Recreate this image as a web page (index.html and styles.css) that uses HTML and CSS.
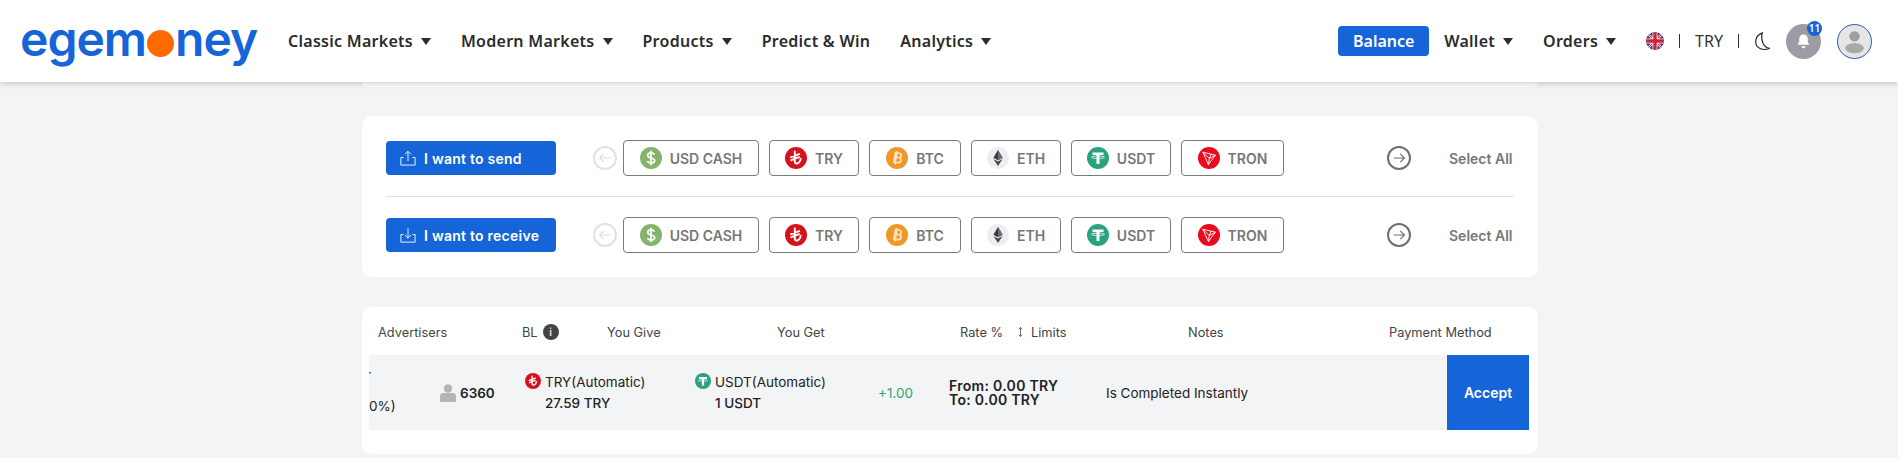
FILE: index.html
```html
<!DOCTYPE html>
<html lang="en">
<head>
  <meta charset="UTF-8" />
  <meta name="viewport" content="width=device-width, initial-scale=1.0" />
  <title>Egemoney P2P</title>
  <link rel="stylesheet" href="styles.css">
</head>
<body>
  <svg class="sprites" aria-hidden="true">
    <symbol id="c-usd" viewBox="0 0 22 22"><circle cx="11" cy="11" r="11" fill="#84b469"/><path d="M14.500 7.600c-.6-1.200-1.900-1.700-3.500-1.700-1.900 0-3.300.9-3.300 2.500 0 3.400 7 1.700 7 5.200 0 1.600-1.500 2.500-3.700 2.500-1.700 0-3-.6-3.600-1.900M11 3.800v14.400" fill="none" stroke="#fff" stroke-width="1.700"/></symbol>
    <symbol id="c-try" viewBox="0 0 22 22"><circle cx="11" cy="11" r="11" fill="#d5121e"/><path d="M9.800 4.500v10.300c0 2 2.300 2.200 3.900 1 1.300-1 1.900-2.400 1.900-4M6 10.200l8.200-3.100M6.200 13.200l7.800-3" fill="none" stroke="#fff" stroke-width="1.900" stroke-linecap="round"/></symbol>
    <symbol id="c-btc" viewBox="0 0 22 22"><circle cx="11" cy="11" r="11" fill="#ef982a"/><path d="M8.600 5.800h3.300c1.800 0 2.900.8 2.900 2.300 0 1.200-.7 2-1.800 2.200 1.400.2 2.300 1.100 2.300 2.500 0 1.700-1.300 2.700-3.300 2.700H8.600zM10 10.300h2.400M10 4.300v13.400" transform="rotate(10 11 11)" fill="none" stroke="#fbe3c0" stroke-width="1.700"/></symbol>
    <symbol id="c-eth" viewBox="0 0 22 22"><circle cx="11" cy="11" r="11" fill="#eceef2"/><path d="M11 3l-4.600 7.800L11 13.300l4.600-2.500z" fill="#3b3b3f"/><path d="M11 3v10.300l4.600-2.500z" fill="#6c6c70"/><path d="M6.400 11.900L11 19l4.600-7.100-4.600 2.600z" fill="#48484c"/></symbol>
    <symbol id="c-usdt" viewBox="0 0 22 22"><circle cx="11" cy="11" r="11" fill="#2ba27e"/><path d="M5.500 5.500h11v2.600h-4v9h-3v-9h-4z" fill="#fff"/><ellipse cx="11" cy="10.300" rx="6.500" ry="1.200" fill="none" stroke="#fff" stroke-width=".8"/></symbol>
    <symbol id="c-tron" viewBox="0 0 22 22"><circle cx="11" cy="11" r="11" fill="#ea0a1e"/><path d="M4.800 5.200l12.600 3-7 9.400zM4.800 5.200l6.500 6.300-.9 6.100M11.300 11.500l6.100-3.300M13 7.200l-1.700 4.300" fill="none" stroke="#fff" stroke-width=".9" stroke-linejoin="round"/></symbol>
  </svg>

  <header class="topbar">
    <a class="logo">egem<span class="logo-dot"></span>ney</a>
    <nav class="menu">
      <a class="menu-item caret">Classic Markets</a>
      <a class="menu-item caret">Modern Markets</a>
      <a class="menu-item caret">Products</a>
      <a class="menu-item">Predict &amp; Win</a>
      <a class="menu-item caret">Analytics</a>
    </nav>
    <div class="account">
      <button class="balance">Balance</button>
      <a class="menu-item caret">Wallet</a>
      <a class="menu-item caret orders">Orders</a>
      <svg class="flag" viewBox="0 0 18 18">
        <clipPath id="flag-clip"><circle cx="9" cy="9" r="9"/></clipPath>
        <g clip-path="url(#flag-clip)">
          <rect width="18" height="18" fill="#27306f"/>
          <path d="M0 0l18 18M18 0L0 18" stroke="#fff" stroke-width="2.600"/>
          <path d="M0 0l18 18M18 0L0 18" stroke="#cf2338" stroke-width="1.200"/>
          <path d="M9 0v18M0 9h18" stroke="#fff" stroke-width="5"/>
          <path d="M9 0v18M0 9h18" stroke="#cf2338" stroke-width="3.400"/>
        </g>
      </svg>
      <span class="sep"></span>
      <span class="currency">TRY</span>
      <span class="sep"></span>
      <svg class="moon" viewBox="0 0 16 18"><path d="M7.800 .8C3.400 2.600 1.200 6 1.600 10c.4 4.600 6 8.600 13.400 5.400C9.400 15 6 8.400 7.800 .8z" fill="none" stroke="#222" stroke-width="1.100"/></svg>
      <div class="bell">
        <svg viewBox="0 0 16 18" class="bell-icon"><path d="M8 1.500c-3 0-4.600 2.200-4.600 5v3L1.800 12.500h12.400l-1.600-3v-3c0-2.800-1.600-5-4.600-5z" fill="#fff"/><path d="M5.800 14h4.400c-.2 1.400-1 2.200-2.200 2.200S6 15.400 5.800 14z" fill="#fff"/></svg>
        <span class="badge">11</span>
      </div>
      <div class="avatar">
        <svg viewBox="0 0 35 35"><circle cx="17.500" cy="12" r="5.500" fill="#9d9e9f"/><ellipse cx="17.500" cy="24.500" rx="10" ry="5.500" fill="#a9a9a6"/></svg>
      </div>
    </div>
  </header>

  <main class="page">
    <div class="behind"></div>

    <section class="card filters">
      <div class="filter-row">
        <button class="side-btn">
          <svg viewBox="0 0 18 18"><path d="M1 8.500V17h16V8.500h-3M4 8.500H1M9 12.500V1.500M5.500 5L9 1.500 12.500 5" fill="none" stroke="#fff" stroke-width="1"/></svg>
          I want to send
        </button>
        <span class="round-arrow faded"><svg viewBox="0 0 24 24"><path d="M18.500 12h-13M10.500 7L5.500 12l5 5" /></svg></span>
        <div class="coins">
          <a class="coin coin-usd"><svg><use href="#c-usd"/></svg>USD CASH</a>
          <a class="coin coin-try"><svg><use href="#c-try"/></svg>TRY</a>
          <a class="coin coin-btc"><svg><use href="#c-btc"/></svg>BTC</a>
          <a class="coin coin-eth"><svg><use href="#c-eth"/></svg>ETH</a>
          <a class="coin coin-usdt"><svg><use href="#c-usdt"/></svg>USDT</a>
          <a class="coin coin-tron"><svg><use href="#c-tron"/></svg>TRON</a>
        </div>
        <span class="round-arrow next"><svg viewBox="0 0 24 24"><path d="M5.500 12h13M13.500 7l5 5-5 5" /></svg></span>
        <a class="select-all">Select All</a>
      </div>
      <div class="filter-row second">
        <button class="side-btn">
          <svg viewBox="0 0 18 18"><path d="M1 8.500V17h16V8.500h-3M4 8.500H1M9 1.500v11M5.500 9L9 12.500 12.500 9" fill="none" stroke="#fff" stroke-width="1"/></svg>
          I want to receive
        </button>
        <span class="round-arrow faded"><svg viewBox="0 0 24 24"><path d="M18.500 12h-13M10.500 7L5.500 12l5 5" /></svg></span>
        <div class="coins">
          <a class="coin coin-usd"><svg><use href="#c-usd"/></svg>USD CASH</a>
          <a class="coin coin-try"><svg><use href="#c-try"/></svg>TRY</a>
          <a class="coin coin-btc"><svg><use href="#c-btc"/></svg>BTC</a>
          <a class="coin coin-eth"><svg><use href="#c-eth"/></svg>ETH</a>
          <a class="coin coin-usdt"><svg><use href="#c-usdt"/></svg>USDT</a>
          <a class="coin coin-tron"><svg><use href="#c-tron"/></svg>TRON</a>
        </div>
        <span class="round-arrow next"><svg viewBox="0 0 24 24"><path d="M5.500 12h13M13.500 7l5 5-5 5" /></svg></span>
        <a class="select-all">Select All</a>
      </div>
    </section>

    <section class="card offers">
      <div class="offers-head">
        <span class="h-adv">Advertisers</span>
        <span class="h-bl">BL <i class="info">i</i></span>
        <span class="h-give">You Give</span>
        <span class="h-get">You Get</span>
        <span class="h-rate">Rate %</span>
        <span class="h-limits"><svg viewBox="0 0 6 12"><path d="M3 .5v11M1 2.800L3 .5l2 2.300M1 9.200l2 2.300 2-2.300" fill="none" stroke="#555" stroke-width="1"/></svg>Limits</span>
        <span class="h-notes">Notes</span>
        <span class="h-pay">Payment Method</span>
      </div>
      <div class="offer">
        <div class="o-adv">
          <span class="adv-name">Trader</span>
          <span class="adv-rate">(100%)</span>
        </div>
        <div class="o-orders">
          <svg viewBox="0 0 16 18"><circle cx="8" cy="4.500" r="4.200" fill="#b4b6b8"/><path d="M0 18v-6.500C0 10 1.500 9 3.500 9h9c2 0 3.500 1 3.500 2.500V18z" fill="#b4b6b8"/></svg>
          6360
        </div>
        <div class="o-give">
          <svg><use href="#c-try"/></svg>
          <div><div>TRY(Automatic)</div><div class="amount">27.59 TRY</div></div>
        </div>
        <div class="o-get">
          <svg><use href="#c-usdt"/></svg>
          <div><div>USDT(Automatic)</div><div class="amount">1 USDT</div></div>
        </div>
        <div class="o-rate">+1.00</div>
        <div class="o-limits">From: 0.00 TRY<br>To: 0.00 TRY</div>
        <div class="o-notes">Is Completed Instantly</div>
        <button class="accept">Accept</button>
      </div>
    </section>
  </main>
</body>
</html>
```

FILE: styles.css
```css
* {
  box-sizing: border-box;
}
body {
  margin: 0;
  background: #f4f4f4;
  font-family: "Inter", sans-serif;
  color: #222;
  overflow: hidden;
}
button {
  border: none;
  cursor: pointer;
  font-family: inherit;
}
.sprites {
  display: none;
}

/* top bar */
.topbar {
  position: relative;
  z-index: 2;
  display: flex;
  align-items: center;
  height: 82px;
  padding-left: 20px;
  background: #fff;
  box-shadow: 0 2px 6px rgba(0, 0, 0, 0.18);
}
.logo {
  display: flex;
  align-items: center;
  width: 268px;
  font-family: "Inter", sans-serif;
  font-size: 48px;
  font-weight: 600;
  letter-spacing: -1px;
  color: #1565d8;
  line-height: 1;
  padding-bottom: 4px;
}
.logo-dot {
  width: 27px;
  height: 27px;
  margin: 8px 1px 0;
  border-radius: 50%;
  background: #ff6a00;
}
.menu {
  display: flex;
  gap: 30px;
}
.menu-item {
  font-family: "Noto Sans", sans-serif;
  font-size: 16px;
  font-weight: 600;
  letter-spacing: 0.27px;
  color: #2b2b2b;
  display: flex;
  align-items: center;
}
.caret::after {
  content: "";
  margin-left: 8px;
  margin-top: 1px;
  border-left: 5.5px solid transparent;
  border-right: 5.5px solid transparent;
  border-top: 7px solid #2b2b2b;
}
.account {
  display: flex;
  align-items: center;
  margin-left: auto;
  padding-right: 26px;
}
.balance {
  width: 91px;
  height: 30px;
  margin-right: 15px;
  border-radius: 4px;
  background: #1565d8;
  color: #fff;
  font-family: "Noto Sans", sans-serif;
  font-size: 16px;
  font-weight: 600;
}
.orders {
  margin-left: 30px;
  margin-right: 30px;
}
.flag {
  width: 18px;
  height: 18px;
}
.sep {
  width: 1px;
  height: 14px;
  background: #333;
  margin: 0 15px;
}
.currency {
  font-family: "Noto Sans", sans-serif;
  font-size: 16px;
  color: #333;
}
.moon {
  width: 17px;
  height: 19px;
  margin-right: 15px;
}
.bell {
  position: relative;
  display: flex;
  align-items: center;
  justify-content: center;
  width: 35px;
  height: 35px;
  border-radius: 50%;
  background: #9b9ca4;
}
.bell-icon {
  width: 15px;
  height: 17px;
}
.badge {
  position: absolute;
  top: -3px;
  right: -1px;
  width: 15px;
  height: 15px;
  border-radius: 50%;
  background: #1565d8;
  color: #fff;
  font-family: "Noto Sans", sans-serif;
  font-size: 10px;
  font-weight: 600;
  line-height: 15px;
  text-align: center;
}
.avatar {
  width: 35px;
  height: 35px;
  margin-left: 16px;
  border-radius: 50%;
  border: 1px solid #2d5ba8;
  background: #e6e6e6;
  overflow: hidden;
}
.avatar svg {
  display: block;
  width: 33px;
  height: 33px;
}

/* content */
.page {
  width: 1176px;
  margin-left: 362px;
}
.behind {
  height: 5px;
  background: #fff;
  border-radius: 0 0 8px 8px;
}
.card {
  background: #fff;
  border-radius: 10px;
}
.filters {
  margin-top: 29px;
  height: 161px;
  padding: 24px 24px 0;
}
.filter-row {
  display: flex;
  align-items: center;
  height: 36px;
}
.filter-row.second {
  margin-top: 41px;
  position: relative;
}
.filter-row.second::before {
  content: "";
  position: absolute;
  top: -21px;
  left: 0;
  right: 0;
  height: 1px;
  background: #e0e0e0;
}
.side-btn {
  display: flex;
  align-items: center;
  gap: 8px;
  width: 170px;
  height: 34px;
  padding: 0 0 0 14px;
  border-radius: 4px;
  background: #1565d8;
  color: #fff;
  font-size: 14px;
  font-weight: 600;
  letter-spacing: 0.25px;
}
.side-btn svg {
  width: 16px;
  height: 18px;
}
.round-arrow {
  width: 24px;
  height: 24px;
  border-radius: 50%;
  border: 2px solid #6f6f6f;
  display: block;
}
.round-arrow svg {
  display: block;
  width: 20px;
  height: 20px;
}
.round-arrow path {
  fill: none;
  stroke: #6f6f6f;
  stroke-width: 1.4;
}
.round-arrow.faded {
  margin-left: 37px;
  margin-right: 6px;
  border-color: #e2e2e2;
}
.round-arrow.faded path {
  stroke: #dedede;
}
.coins {
  display: flex;
  gap: 10px;
}
.coin {
  display: flex;
  align-items: center;
  gap: 8px;
  height: 36px;
  border: 1px solid #7b7b7b;
  border-radius: 4px;
  justify-content: center;
  font-size: 14px;
  font-weight: 600;
  color: #777;
}
.coin svg {
  width: 22px;
  height: 22px;
}
.coin-usd { width: 136px; }
.coin-try { width: 90px; }
.coin-btc { width: 92px; }
.coin-eth { width: 90px; }
.coin-usdt { width: 100px; }
.coin-tron { width: 103px; }
.round-arrow.next {
  margin-left: 103px;
}
.select-all {
  margin-left: 38px;
  font-size: 14px;
  font-weight: 600;
  color: #777;
}

/* offers table */
.offers {
  margin-top: 30px;
  height: 147px;
  padding: 0 9px 0 7px;
}
.offers-head {
  display: flex;
  align-items: center;
  height: 48px;
  padding-top: 2px;
  font-size: 12.8px;
  color: #444;
}
.h-adv { width: 144px; margin-left: 9px; }
.h-bl { width: 85px; display: flex; align-items: center; gap: 5px; }
.h-give { width: 170px; }
.h-get { width: 183px; }
.h-rate { width: 58px; }
.h-limits { width: 170px; display: flex; align-items: center; gap: 8px; }
.h-limits svg { width: 5px; height: 12px; }
.h-notes { width: 201px; }
.info {
  display: inline-block;
  width: 16px;
  height: 16px;
  border-radius: 50%;
  background: #444;
  color: #ddd;
  font-size: 10px;
  line-height: 16px;
  text-align: center;
  font-style: normal;
  font-weight: 700;
}
.offer {
  display: flex;
  align-items: center;
  height: 75px;
  background: #f2f4f6;
  font-size: 13.5px;
  color: #222;
}
.o-adv {
  width: 71px;
  height: 100%;
  overflow: hidden;
  position: relative;
}
.adv-name {
  position: absolute;
  top: 12px;
  right: 69px;
  color: #1565d8;
}
.adv-rate {
  position: absolute;
  top: 43px;
  left: -19px;
  white-space: nowrap;
}
.o-orders {
  width: 85px;
  display: flex;
  align-items: center;
  gap: 4px;
  font-weight: 600;
}
.o-orders svg {
  width: 16px;
  height: 18px;
}
.o-give,
.o-get {
  display: flex;
  gap: 4px;
  line-height: 21px;
}
.o-give { width: 170px; }
.o-get { width: 183px; }
.o-give svg,
.o-get svg {
  width: 16px;
  height: 16px;
  margin-top: 1px;
}
.amount {
  font-weight: 500;
}
.o-rate {
  width: 71px;
  color: #2fa86a;
}
.o-limits {
  width: 157px;
  font-size: 14px;
  font-weight: 600;
  letter-spacing: 0.3px;
  line-height: 14px;
}
.o-notes {
  flex: 1;
}
.accept {
  width: 82px;
  height: 75px;
  background: #1565d8;
  color: #fff;
  font-size: 14px;
  font-weight: 600;
}
```
